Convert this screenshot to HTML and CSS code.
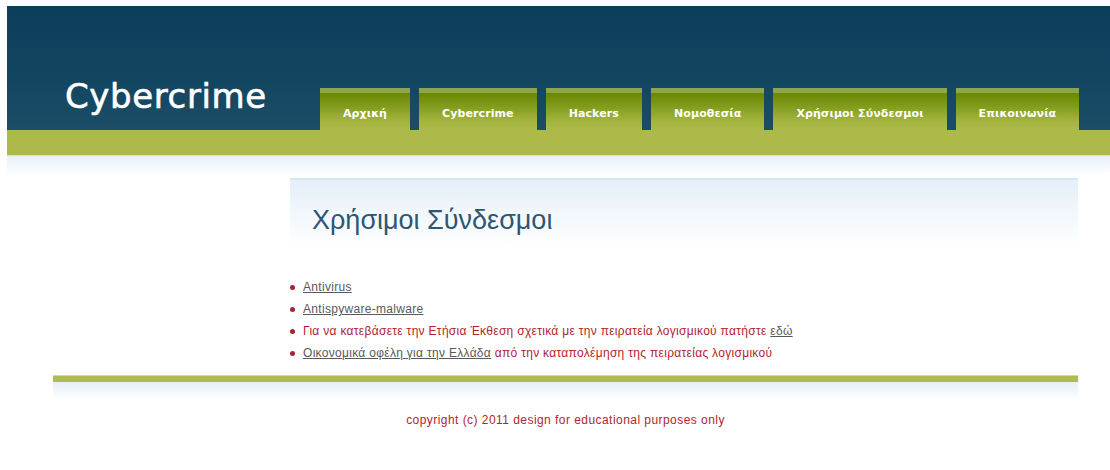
FILE: index.html
```html
<!DOCTYPE html>
<html lang="el">
<head>
<meta charset="utf-8">
<title>Cybercrime - Χρήσιμοι Σύνδεσμοι</title>
<link rel="stylesheet" href="styles.css">
</head>
<body>
<header class="masthead">
  <div class="masthead-top">
    <div class="logo">Cybercrime</div>
    <nav class="tabs">
      <a class="tab" href="#">Αρχική</a>
      <a class="tab" href="#">Cybercrime</a>
      <a class="tab" href="#">Hackers</a>
      <a class="tab" href="#">Νομοθεσία</a>
      <a class="tab" href="#">Χρήσιμοι Σύνδεσμοι</a>
      <a class="tab" href="#">Επικοινωνία</a>
    </nav>
  </div>
  <div class="band"></div>
  <div class="band-fade"></div>
</header>

<div class="wrapper">
  <div class="columns">
    <aside class="sidebar"></aside>
    <main class="content">
      <div class="title-box">
        <h1>Χρήσιμοι Σύνδεσμοι</h1>
      </div>
      <ul class="links">
        <li><a href="#">Antivirus</a></li>
        <li><a href="#">Antispyware-malware</a></li>
        <li>Για να κατεβάσετε την Ετήσια Έκθεση σχετικά με την πειρατεία λογισμικού πατήστε <a href="#">εδώ</a></li>
        <li><a href="#">Οικονομικά οφέλη για την Ελλάδα</a> από την καταπολέμηση της πειρατείας λογισμικού</li>
      </ul>
    </main>
  </div>
  <footer class="footer">
    <div class="footer-bar"></div>
    <div class="footer-fade"></div>
    <p class="copyright">copyright (c) 2011 design for educational purposes only</p>
  </footer>
</div>
</body>
</html>
```

FILE: styles.css
```css
html, body {
  margin: 0;
  padding: 0;
  background: #ffffff;
}

body {
  padding: 6px 0 0 7px;
  font-family: "Liberation Sans", Arial, sans-serif;
  overflow: hidden;
}

/* ---------- header ---------- */
.masthead-top {
  height: 124px;
  background: linear-gradient(to bottom, #0a3e5a 0%, #114560 55%, #1c4d66 100%);
  display: flex;
  align-items: flex-end;
}

.logo {
  width: 255px;
  padding-left: 58px;
  padding-bottom: 14px;
  font-family: "DejaVu Sans", Verdana, sans-serif;
  font-size: 34px;
  line-height: 40px;
  color: #ffffff;
  letter-spacing: 0.6px;
  -webkit-text-stroke: 0.6px #ffffff;
}

.tabs {
  display: flex;
  gap: 9px;
  align-items: flex-end;
}

.tab {
  height: 42px;
  box-sizing: border-box;
  padding: 3px 23px 0;
  display: flex;
  align-items: center;
  font-family: "DejaVu Sans", Tahoma, sans-serif;
  font-weight: bold;
  font-size: 11px;
  letter-spacing: 0.1px;
  color: #ffffff;
  text-decoration: none;
  border-top: 5px solid #8ea44e;
  background: linear-gradient(to bottom, #6a8700 0%, #819b1c 35%, #a3b43e 75%, #adba4a 100%);
  white-space: nowrap;
}

.band {
  height: 25px;
  background: #adba4a;
  border-bottom: 1px solid #dbe2a8;
}

.band-fade {
  height: 20px;
  background: linear-gradient(to bottom, #e8f0f8, #ffffff);
}

/* ---------- page body ---------- */
.wrapper {
  width: 1025px;
  margin-left: 46px;
}

.columns {
  display: flex;
}

.sidebar {
  width: 237px;
  flex: none;
}

.content {
  width: 788px;
  padding-top: 2px;
}

.title-box {
  height: 66px;
  border-top: 2px solid #d6e7f4;
  background: linear-gradient(to bottom, #e4eff9 0%, #f3f8fc 55%, #ffffff 100%);
  display: flex;
  align-items: center;
  padding-left: 22px;
}

.title-box h1 {
  margin: 14px 0 0;
  font-family: "Liberation Sans", Arial, sans-serif;
  font-weight: normal;
  font-size: 27px;
  color: #2d5772;
}

.links {
  list-style: none;
  margin: 30px 0 0;
  padding: 0;
  font-size: 12px;
  letter-spacing: 0.3px;
  color: #b0262c;
}

.links li {
  position: relative;
  padding-left: 13px;
  line-height: 22px;
}

.links li::before {
  content: "";
  position: absolute;
  left: 0;
  top: 9px;
  width: 5px;
  height: 5px;
  border-radius: 50%;
  background: #a8262b;
}

.links a {
  color: #595959;
  text-decoration: underline;
}

/* ---------- footer ---------- */
.footer {
  margin-top: 11px;
}

.footer-bar {
  height: 6px;
  background: #b0bc4c;
  border-top: 1px solid #d3dba0;
}

.footer-fade {
  height: 18px;
  background: linear-gradient(to bottom, #e6eff8, #ffffff);
}

.copyright {
  margin: 13px 0 0;
  text-align: center;
  font-size: 12px;
  letter-spacing: 0.45px;
  color: #b0262c;
}
```
